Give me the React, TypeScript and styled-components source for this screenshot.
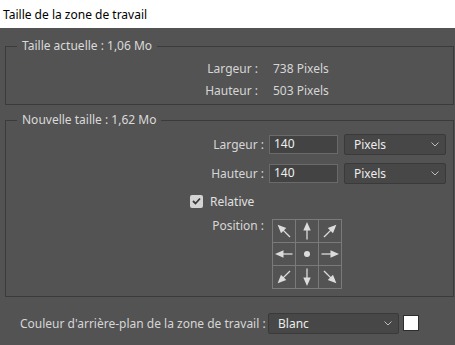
import styled, { createGlobalStyle } from "styled-components";

const GlobalStyle = createGlobalStyle`
  html, body {
    margin: 0;
    padding: 0;
    background: #535353;
    font-family: "Noto Sans", "Open Sans", sans-serif;
    font-size: 12px;
    color: #d6d6d6;
  }
  * { box-sizing: border-box; }
`;

const Window = styled.div`
  width: 455px;
  height: 345px;
  display: flex;
  flex-direction: column;
  background: #535353;
`;

const TitleBar = styled.div`
  height: 28px;
  background: #ffffff;
  color: #000;
  padding: 0 3px;
  display: flex;
  align-items: center;
`;

const Body = styled.div`
  display: flex;
  flex-direction: column;
  padding: 10px 1px 0 5px;
`;

const Group = styled.fieldset<{ $gap?: number }>`
  margin: 0 0 ${p => p.$gap ?? 0}px 0;
  padding: 0;
  border: 1px solid #3b3b3b;
  min-width: 0;
`;

const Legend = styled.legend`
  margin-left: 11px;
  padding: 0 5px;
  line-height: 16px;
  color: #dadada;
`;

const InfoGrid = styled.div`
  display: grid;
  grid-template-columns: 252px auto;
  column-gap: 15px;
  grid-auto-rows: 22px;
  align-items: center;
  padding: 3px 0 3px;
`;

const Label = styled.span`
  justify-self: end;
  white-space: nowrap;
`;

const Value = styled.span`
  white-space: nowrap;
`;

const FormGrid = styled.div`
  display: grid;
  grid-template-columns: 258px 70px 102px;
  column-gap: 5px;
  align-items: center;
  padding: 5px 0 7px;
`;

const Cell = styled.div<{ $mt?: number }>`
  margin-top: ${p => p.$mt ?? 0}px;
  display: flex;
  align-items: center;
  height: 22px;
`;

const LabelCell = styled(Cell)`
  justify-content: flex-end;
  white-space: nowrap;
`;

const NumberBox = styled.div`
  width: 69px;
  height: 19px;
  background: #434343;
  border: 1px solid #6a6a6a;
  color: #f0f0f0;
  padding-left: 4px;
  display: flex;
  align-items: center;
  line-height: 1;
`;

const SelectBox = styled.div<{ $w: number }>`
  width: ${p => p.$w}px;
  height: 21px;
  background: #474747;
  border: 1px solid #3a3a3a;
  border-radius: 2px;
  color: #ececec;
  padding: 0 6px 0 9px;
  display: flex;
  align-items: center;
  justify-content: space-between;
`;

const CheckRow = styled.div`
  grid-column: 1 / -1;
  margin-top: 9px;
  padding-left: 184px;
  display: flex;
  align-items: center;
  gap: 7px;
  height: 16px;
  color: #e0e0e0;
`;

const CheckBox = styled.span`
  width: 13px;
  height: 13px;
  border-radius: 2px;
  background: #d4d4d4;
  display: flex;
  align-items: center;
  justify-content: center;
`;

const PositionRow = styled.div`
  grid-column: 1 / -1;
  margin-top: 10px;
  display: grid;
  grid-template-columns: 258px auto;
  column-gap: 8px;
  align-items: start;
`;

const PositionLabel = styled.span`
  justify-self: end;
  line-height: 14px;
`;

const AnchorGrid = styled.div`
  display: grid;
  grid-template-columns: repeat(3, 22px);
  grid-template-rows: repeat(3, 22px);
  gap: 1px;
  padding: 1px;
  background: #7a7a7a;
  width: 70px;
  height: 70px;
`;

const AnchorCell = styled.div`
  background: #535353;
  display: flex;
  align-items: center;
  justify-content: center;
`;

const Footer = styled.div`
  display: flex;
  align-items: center;
  margin-top: 15px;
  height: 22px;
  padding-left: 15px;
`;

const FooterLabel = styled.span`
  width: 244px;
  white-space: nowrap;
  margin-right: 4px;
`;

const Swatch = styled.span`
  width: 16px;
  height: 16px;
  margin-left: 4px;
  background: #ffffff;
  border: 1px solid #2e2e2e;
`;

function Chevron() {
  return (
    <svg width="8" height="5" viewBox="0 0 8 5">
      <polyline points="0.5,0.5 4,4 7.5,0.5" fill="none" stroke="#bdbdbd" strokeWidth="1" />
    </svg>
  );
}

function Arrow({ angle }: { angle: number | null }) {
  return (
    <svg width="22" height="22" viewBox="0 0 22 22">
      {angle === null ? (
        <circle cx="11" cy="11" r="3" fill="#dcdcdc" />
      ) : (
        <g transform={`rotate(${angle} 11 11)`} fill="#dcdcdc" stroke="#dcdcdc">
          <line x1="11" y1="9" x2="11" y2="19.5" strokeWidth="1.3" />
          <polygon points="11,2 7.3,10.5 14.7,10.5" stroke="none" />
        </g>
      )}
    </svg>
  );
}

const anchors: (number | null)[] = [-45, 0, 45, -90, null, 90, -135, 180, 135];

export default function App() {
  return (
    <Window>
      <GlobalStyle />
      <TitleBar>Taille de la zone de travail</TitleBar>
      <Body>
        <Group $gap={7}>
          <Legend>Taille actuelle : 1,06 Mo</Legend>
          <InfoGrid>
            <Label>Largeur :</Label>
            <Value>738 Pixels</Value>
            <Label>Hauteur :</Label>
            <Value>503 Pixels</Value>
          </InfoGrid>
        </Group>
        <Group>
          <Legend>Nouvelle taille : 1,62 Mo</Legend>
          <FormGrid>
            <LabelCell>Largeur :</LabelCell>
            <Cell><NumberBox>140</NumberBox></Cell>
            <Cell><SelectBox $w={102}>Pixels<Chevron /></SelectBox></Cell>
            <LabelCell $mt={7}>Hauteur :</LabelCell>
            <Cell $mt={7}><NumberBox>140</NumberBox></Cell>
            <Cell $mt={7}><SelectBox $w={102}>Pixels<Chevron /></SelectBox></Cell>
            <CheckRow>
              <CheckBox>
                <svg width="9" height="8" viewBox="0 0 9 8">
                  <polyline points="1,4 3.5,6.5 8,1.5" fill="none" stroke="#3a3a3a" strokeWidth="1.8" />
                </svg>
              </CheckBox>
              Relative
            </CheckRow>
            <PositionRow>
              <PositionLabel>Position :</PositionLabel>
              <AnchorGrid>
                {anchors.map((a, i) => (
                  <AnchorCell key={i}><Arrow angle={a} /></AnchorCell>
                ))}
              </AnchorGrid>
            </PositionRow>
          </FormGrid>
        </Group>
        <Footer>
          <FooterLabel>Couleur d'arrière-plan de la zone de travail :</FooterLabel>
          <SelectBox $w={131}>Blanc<Chevron /></SelectBox>
          <Swatch />
        </Footer>
      </Body>
    </Window>
  );
}
